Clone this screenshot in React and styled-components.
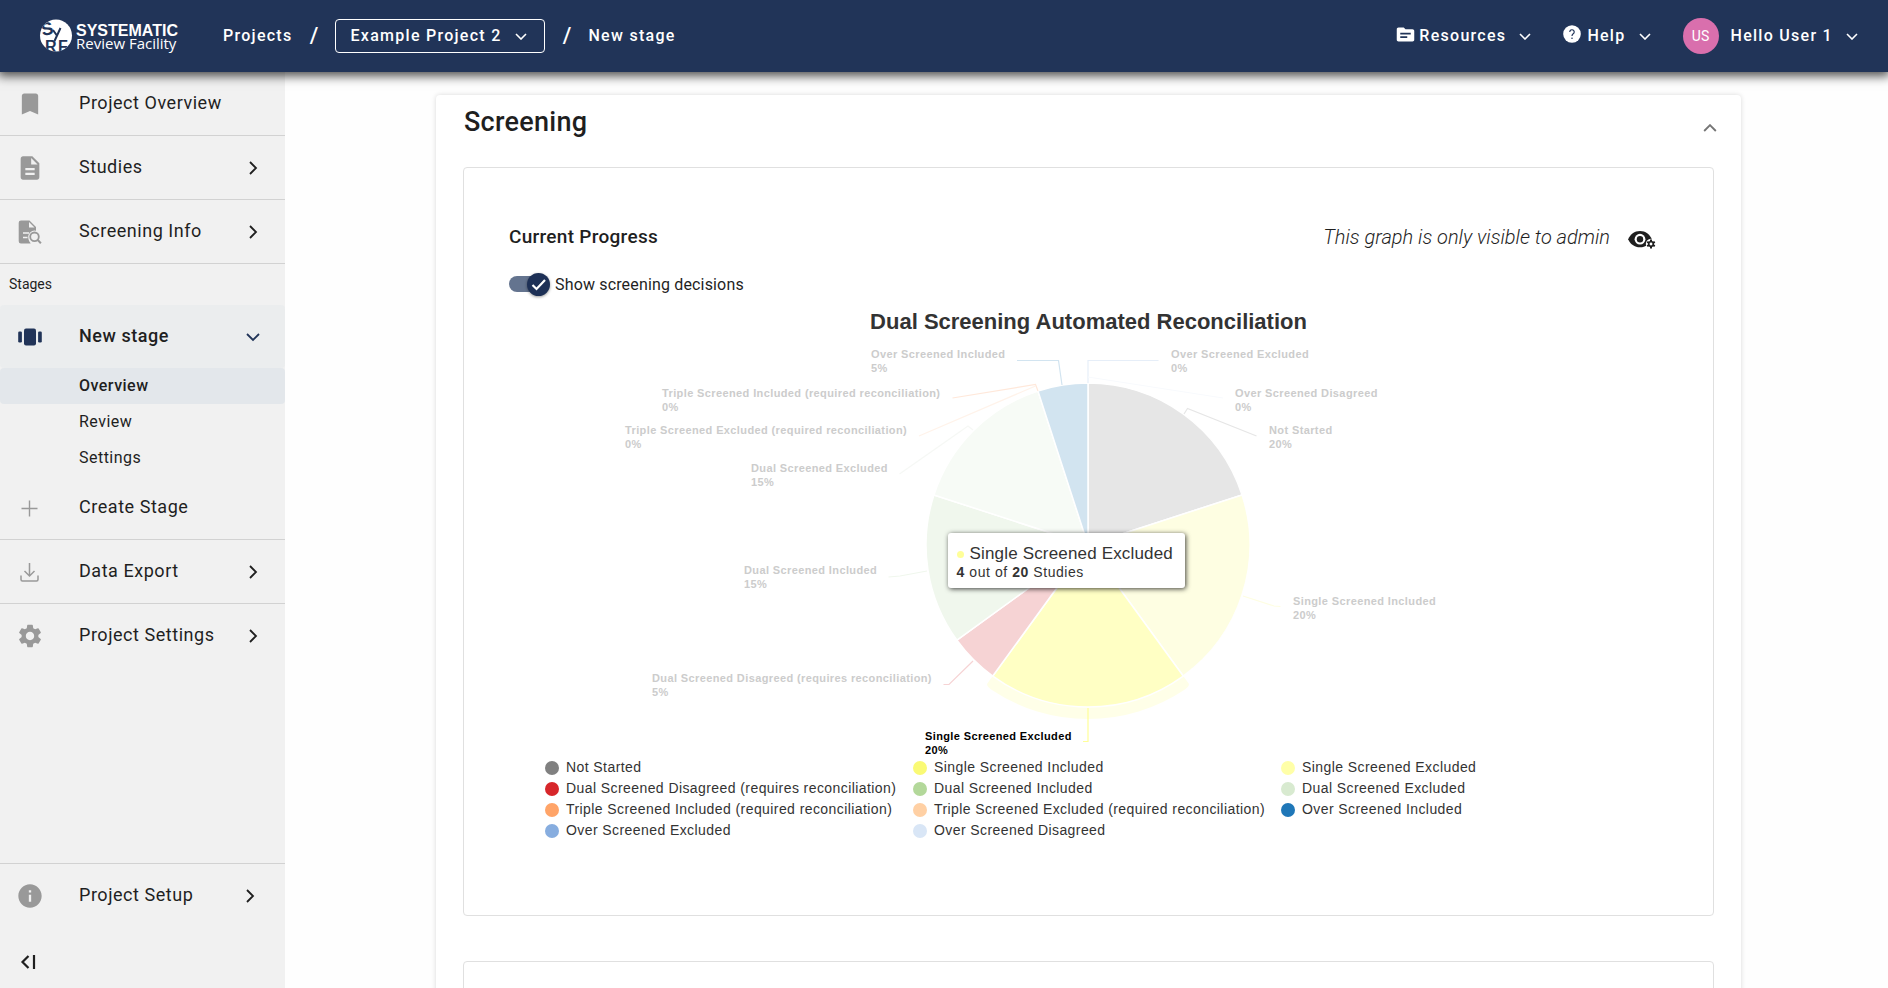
import React from "react";
import styled, { createGlobalStyle, css } from "styled-components";
import { MdBookmark, MdDescription, MdSettings, MdInfo, MdSource } from "react-icons/md";

const NAVY = "#213458";
const INK = "#1f1f1f";

const GlobalStyle = createGlobalStyle`
  *, *::before, *::after { box-sizing: border-box; }
  body {
    margin: 0;
    background: #fefefe;
    color: ${INK};
    font-family: Roboto, "Liberation Sans", sans-serif;
    font-size: 16px;
  }
  button { font: inherit; color: inherit; letter-spacing: inherit; background: none; border: 0; padding: 0; cursor: pointer; }
  a { color: inherit; text-decoration: none; }
  h1, h2, h3, p, ul { margin: 0; padding: 0; }
  ul { list-style: none; }
  svg { display: block; flex: none; }
`;

/* ---------- shell ---------- */

const Shell = styled.div`
  display: flex;
  flex-direction: column;
  height: 100vh;
`;

const Body = styled.div`
  display: flex;
  flex: 1;
  min-height: 0;
`;

/* ---------- top bar ---------- */

const TopBar = styled.header`
  position: relative;
  z-index: 2;
  display: flex;
  align-items: center;
  justify-content: space-between;
  flex: none;
  height: 72px;
  padding: 0 30px 0 39px;
  background: ${NAVY};
  color: #fff;
  font-weight: 500;
  box-shadow: 0 2px 10px 2px rgba(0, 0, 0, 0.7);
  clip-path: inset(0 0 -24px 0);
`;

const Trail = styled.nav`
  display: flex;
  align-items: center;
  letter-spacing: 0.08em;
`;

const LogoLink = styled.a`
  margin-right: 44px;
`;

const Crumb = styled.a`
  padding-bottom: 2px;
`;

const Slash = styled.span`
  width: 43px;
  padding-bottom: 2px;
  font-size: 22px;
  letter-spacing: 0;
  text-align: center;
`;

const ProjectPicker = styled.button`
  display: flex;
  align-items: center;
  justify-content: space-between;
  width: 210px;
  height: 34px;
  padding: 0 17px 0 14px;
  border: 1px solid #fff;
  border-radius: 4px;
`;

const PickerText = styled.span`
  padding-bottom: 2px;
`;

const Tools = styled.div`
  display: flex;
  align-items: center;
  gap: 32px;
  letter-spacing: 0.08em;
`;

const ToolButton = styled.button`
  display: flex;
  align-items: center;
  gap: 6px;
`;

const ToolIcon = styled.span`
  display: grid;
  place-items: center;
  width: 18px;
  padding-bottom: 4px;
`;

const ToolText = styled.span`
  margin-right: 7px;
  padding-bottom: 2px;
`;

const Avatar = styled.span`
  display: grid;
  place-items: center;
  width: 36px;
  height: 36px;
  margin-right: 6px;
  border-radius: 50%;
  background: #d96fad;
  font-size: 14px;
  font-weight: 400;
  letter-spacing: 0;
`;

/* ---------- side bar ---------- */

const SideBar = styled.nav`
  display: flex;
  flex-direction: column;
  flex: none;
  width: 285px;
  background: #f1f1f1;
`;

const SideItem = styled.a`
  display: grid;
  grid-template-columns: 28px minmax(0, 1fr) 16px;
  align-items: center;
  height: ${(p) => (p.$divided ? "64px" : "63px")};
  padding: 0 ${(p) => (p.$inset ? "27px" : "24px")} 0 16px;
  border-bottom: ${(p) => (p.$divided ? "1px solid #d2d2d2" : "0")};
  font-size: 18px;
  letter-spacing: 0.03em;
  white-space: nowrap;
  color: ${INK};
  svg:first-child { color: #999; }
  ${(p) =>
    p.$active &&
    css`
      background: #ebedee;
      border-radius: 4px;
      font-weight: 500;
      svg, svg:first-child { color: ${NAVY}; }
    `}
`;

const SideText = styled.span`
  padding: 0 0 2px 35px;
`;

const SideLabel = styled.h2`
  padding: 0 9px;
  font-size: 14px;
  font-weight: 400;
  line-height: 41px;
`;

const SubItem = styled.a`
  display: block;
  padding-left: 79px;
  border-radius: 4px;
  font-size: 16px;
  line-height: 36px;
  letter-spacing: 0.03em;
  font-weight: ${(p) => (p.$active ? 500 : 400)};
  background: ${(p) => (p.$active ? "#e3e7eb" : "transparent")};
`;

const SideFoot = styled.div`
  display: flex;
  flex-direction: column;
  margin-top: auto;
  border-top: 1px solid #d2d2d2;
`;

const CollapseButton = styled.button`
  width: 56px;
  height: 52px;
  margin-top: 9px;
  padding-left: 20px;
`;

/* ---------- content ---------- */

const Main = styled.main`
  flex: 1;
  min-width: 0;
  overflow-y: auto;
  scrollbar-width: none;
  padding: 23px 147px 0 151px;
`;

const Panel = styled.section`
  padding: 0 27px 28px;
  border-radius: 4px;
  background: #fff;
  box-shadow: 0 0 5px rgba(0, 0, 0, 0.15);
`;

const PanelHead = styled.div`
  display: flex;
  justify-content: space-between;
  height: 72px;
  padding: 12px 0 0 1px;
`;

const PanelTitle = styled.h1`
  font-size: 27px;
  font-weight: 500;
  line-height: 30px;
  letter-spacing: 0.01em;
`;

const FoldButton = styled.button`
  display: grid;
  place-items: center;
  width: 24px;
  height: 24px;
  margin: 9px -8px 0 0;
  color: #757575;
`;

const Card = styled.section`
  min-height: 300px;
  margin-bottom: 45px;
  padding: 55px 45px 74px;
  border: 1px solid #e0e0e0;
  border-radius: 4px;
`;

const CardHead = styled.div`
  display: flex;
  align-items: center;
  line-height: 28px;
`;

const CardTitle = styled.h2`
  flex: 1;
  font-size: 19px;
  font-weight: 500;
  letter-spacing: 0.015em;
`;

const AdminNote = styled.p`
  margin-right: 18px;
  font-size: 20px;
  font-style: italic;
  font-weight: 300;
`;

const EyeButton = styled.button`
  margin: 4px 12px 0 0;
`;

const SwitchRow = styled.label`
  display: flex;
  align-items: center;
  gap: 5px;
  width: max-content;
  height: 24px;
  margin: 21px 0 13px;
  letter-spacing: 0.01em;
`;

const SwitchInput = styled.input`
  appearance: none;
  position: relative;
  width: 41px;
  height: 16px;
  margin: 0;
  border-radius: 8px;
  background: linear-gradient(#64748f, #64748f) left / 36px 16px no-repeat;
  & + svg {
    position: relative;
    margin-left: -28px;
    border-radius: 50%;
    background: #1d3056;
    box-shadow: 0 1px 3px rgba(0, 0, 0, 0.4);
  }
`;

/* ---------- chart ---------- */

const Chart = styled.figure`
  margin: 0;
  font-family: "Liberation Sans", Arial, sans-serif;
  color: #333;
`;

const ChartTitle = styled.h3`
  height: 32px;
  font-size: 22px;
  line-height: 26px;
  text-align: center;
`;

const PieBox = styled.div`
  position: relative;
  width: 930px;
  margin: 0 auto;
  svg text {
    font-size: 11px;
    font-weight: 700;
    letter-spacing: 0.035em;
  }
`;

const Tooltip = styled.div`
  position: absolute;
  left: 324px;
  top: 192px;
  width: 237px;
  height: 55px;
  padding: 11px 9px;
  border-radius: 3px;
  background: #fff;
  box-shadow: 1px 1px 5px rgba(0, 0, 0, 0.75);
  font-size: 14px;
  line-height: 18px;
  letter-spacing: 0.04em;
  white-space: nowrap;
`;

const TipTitle = styled.div`
  display: flex;
  align-items: center;
  gap: 6px;
  font-size: 17px;
  line-height: 19px;
  letter-spacing: 0.01em;
  &::before {
    content: "";
    width: 7px;
    height: 7px;
    margin-top: 2px;
    border-radius: 50%;
    background: #ffff99;
  }
`;

const Legend = styled.ul`
  display: grid;
  grid-template-columns: repeat(3, 368px);
  padding-left: 36px;
  font-size: 14px;
  line-height: 21px;
  letter-spacing: 0.03em;
`;

const LegendItem = styled.li`
  display: flex;
  align-items: center;
  gap: 7px;
  white-space: nowrap;
  &::before {
    content: "";
    width: 14px;
    height: 14px;
    border-radius: 50%;
    background: ${(p) => p.$color};
  }
`;

/* ---------- icons ---------- */

const chevrons = {
  down: "M1 1l5 5 5-5",
  up: "M1 6l5-5 5 5",
};

function Chevron({ dir = "down", w = 12 }) {
  return (
    <svg width={w} height={(w * 7) / 12} viewBox="0 0 12 7" fill="none" stroke="currentColor" strokeWidth="1.6" aria-hidden="true">
      <path d={chevrons[dir]} />
    </svg>
  );
}

function SideChevron({ open }) {
  return (
    <svg width="16" height="16" viewBox="0 0 16 16" fill="none" stroke="currentColor" strokeWidth="1.8" aria-hidden="true">
      <path d={open ? "M2 5l6 6 6-6" : "M5 2l6 6-6 6"} />
    </svg>
  );
}

function Logo() {
  return (
    <svg width="140" height="36" viewBox="0 0 140 36" role="img" aria-label="Systematic Review Facility">
      <defs>
        <clipPath id="disc"><circle cx="17" cy="17.5" r="16" /></clipPath>
      </defs>
      <circle cx="17" cy="17.5" r="16" fill="#fff" />
      <g clipPath="url(#disc)" fill={NAVY} fontFamily="Liberation Sans, Arial, sans-serif" fontWeight="700">
        <text x="2" y="17" fontSize="18" transform="rotate(-12 8 10)">S</text>
        <path d="M14 12l3.500 5M21.500 10L15.500 23" stroke={NAVY} strokeWidth="2" fill="none" />
        <text x="6" y="34" fontSize="16">R</text>
        <text x="19" y="34" fontSize="16">F</text>
      </g>
      <text x="37" y="18" fill="#fff" fontFamily="Liberation Sans, Arial, sans-serif" fontWeight="700" fontSize="16" letterSpacing="0">SYSTEMATIC</text>
      <text x="37" y="31" fill="#fff" fontFamily="Open Sans, Noto Sans, sans-serif" fontWeight="400" fontSize="15" letterSpacing="0">Review Facility</text>
    </svg>
  );
}

function HelpIcon() {
  return (
    <svg width="18" height="18" viewBox="0 0 18 18" aria-hidden="true">
      <circle cx="9" cy="9" r="8.8" fill="#fff" />
      <path d="M6.8 7a2.2 2.2 0 1 1 3.4 1.8C9.4 9.4 9 9.8 9 11" fill="none" stroke={NAVY} strokeWidth="1.2" />
      <circle cx="9" cy="13.2" r="0.8" fill={NAVY} />
    </svg>
  );
}

function DocSearchIcon() {
  return (
    <svg width="28" height="28" viewBox="0 0 28 28" fill="none" aria-hidden="true">
      <path d="M5 2.5h8.500l6.500 6.500v4.200a7 7 0 0 0-5.500 11.800v.5H5a2.300 2.300 0 0 1-2.300-2.300V4.800A2.300 2.300 0 0 1 5 2.500z" fill="currentColor" />
      <path d="M13 4v5.500h5.500z" fill="#f1f1f1" />
      <path d="M7 15h6M7 19.500h4.500" stroke="#f1f1f1" strokeWidth="1.7" />
      <circle cx="18.5" cy="18.8" r="6.2" fill="#f1f1f1" />
      <circle cx="18.5" cy="18.8" r="4.3" stroke="currentColor" strokeWidth="1.8" />
      <path d="M21.500 21.800l3.400 3.400" stroke="currentColor" strokeWidth="2" />
    </svg>
  );
}

function StagesIcon() {
  return (
    <svg width="28" height="28" viewBox="0 0 28 28" fill="currentColor" aria-hidden="true">
      <rect x="8" y="5.5" width="12" height="17" rx="2" />
      <rect x="2.2" y="8.5" width="3.7" height="11" rx="1.2" />
      <rect x="22.1" y="8.5" width="3.7" height="11" rx="1.2" />
    </svg>
  );
}

function PlusIcon() {
  return (
    <svg width="28" height="28" viewBox="0 0 28 28" stroke="currentColor" strokeWidth="1.4" aria-hidden="true">
      <path d="M13.500 6.500v16M5.500 14.500h16" />
    </svg>
  );
}

function DownloadIcon() {
  return (
    <svg width="28" height="28" viewBox="0 0 28 28" fill="none" stroke="currentColor" strokeWidth="1.5" aria-hidden="true">
      <path d="M13.500 5v12.500M8.500 13l5 5 5-5M5 17.500v4a1.500 1.500 0 0 0 1.500 1.500h14a1.500 1.500 0 0 0 1.500-1.500v-4" />
    </svg>
  );
}

function CollapseIcon() {
  return (
    <svg width="16" height="16" viewBox="0 0 16 16" fill="none" stroke="currentColor" strokeWidth="2.2" aria-hidden="true">
      <path d="M8.500 2L2.500 8l6 6M14 1v14" />
    </svg>
  );
}

function EyeGearIcon() {
  return (
    <svg width="28" height="19" viewBox="0 0 28 19" aria-hidden="true">
      <path d="M12 1C6.600 1 2 4.400 .2 9.200 2 14 6.600 17.300 12 17.300S22 14 23.800 9.200C22 4.400 17.400 1 12 1z" fill={INK} />
      <circle cx="12" cy="9.2" r="5.4" fill="#fff" />
      <circle cx="12" cy="9.2" r="3.2" fill={INK} />
      <circle cx="23" cy="14" r="5.2" fill="#fff" />
      <g transform="translate(23 14)">
        <path d="M0-4.400V4.400M-3.800-2.200L3.800 2.200M-3.800 2.200L3.800-2.200" stroke={INK} strokeWidth="2" />
        <circle r="2.3" fill="#fff" stroke={INK} strokeWidth="1.7" />
      </g>
    </svg>
  );
}

/* ---------- data ---------- */

const CX = 464;
const CY = 204;
const R = 162;

const slices = [
  { share: 20, fill: "#e6e6e6" },
  { share: 20, fill: "#fefee2" },
  { share: 20, fill: "#ffffc4" },
  { share: 5, fill: "#f6d3d4" },
  { share: 15, fill: "#f0f7ed" },
  { share: 15, fill: "#f7fbf6" },
  { share: 5, fill: "#d2e4f0" },
];

const callouts = [
  { name: "Over Screened Included", pct: "5%", x: 247, y: 17, line: "M393 19.5H434.5L438 44", stroke: "#d2e4f0" },
  { name: "Triple Screened Included (required reconciliation)", pct: "0%", x: 38, y: 56, line: "M328.5 57L411.5 43.5L414 50", stroke: "#ffe8da" },
  { name: "Triple Screened Excluded (required reconciliation)", pct: "0%", x: 1, y: 93, line: "M295 95L411.5 45", stroke: "#fff3ea" },
  { name: "Dual Screened Excluded", pct: "15%", x: 127, y: 131, line: "M275.5 133L344 85L349 89", stroke: "#f6f8f5" },
  { name: "Dual Screened Included", pct: "15%", x: 120, y: 233, line: "M264.5 236L276 235L303 230", stroke: "#f0f7ed" },
  { name: "Dual Screened Disagreed (requires reconciliation)", pct: "5%", x: 28, y: 341, line: "M319.5 343.5H325L349 320", stroke: "#f6d3d4" },
  { name: "Single Screened Excluded", pct: "20%", x: 301, y: 399, line: "M459 400.5H464V367", stroke: "#ffff99", on: true },
  { name: "Over Screened Excluded", pct: "0%", x: 547, y: 17, line: "M534.5 19.5H464V42", stroke: "#e6eef8" },
  { name: "Over Screened Disagreed", pct: "0%", x: 611, y: 56, line: "M599 57L464 36", stroke: "#f8fafd" },
  { name: "Not Started", pct: "20%", x: 645, y: 93, line: "M632.5 95L563.5 67.5L560 73", stroke: "#e6e6e6" },
  { name: "Single Screened Included", pct: "20%", x: 669, y: 264, line: "M656.5 265.5L650 265L619 255", stroke: "#fefee2" },
];

const legend = [
  ["Not Started", "#808080"],
  ["Single Screened Included", "#fafa75"],
  ["Single Screened Excluded", "#ffffa8"],
  ["Dual Screened Disagreed (requires reconciliation)", "#d7262a"],
  ["Dual Screened Included", "#b3d89a"],
  ["Dual Screened Excluded", "#d8ead0"],
  ["Triple Screened Included (required reconciliation)", "#ffa468"],
  ["Triple Screened Excluded (required reconciliation)", "#ffd0a4"],
  ["Over Screened Included", "#1f77b8"],
  ["Over Screened Excluded", "#87addf"],
  ["Over Screened Disagreed", "#d9e6f6"],
];

const point = (pct, r) => {
  const a = (pct / 100) * Math.PI * 2;
  return `${CX + r * Math.sin(a)} ${CY - r * Math.cos(a)}`;
};

const wedge = (from, to) => `M${CX} ${CY}L${point(from, R)}A${R} ${R} 0 0 1 ${point(to, R)}Z`;

const halo = `M${point(40, R + 1)}L${point(40, R + 9)}Q${point(40, R + 12)} ${point(40.6, R + 12)}A${R + 12} ${R + 12} 0 0 1 ${point(59.4, R + 12)}Q${point(60, R + 12)} ${point(60, R + 9)}L${point(60, R + 1)}Z`;

function Pie() {
  let start = 0;
  return (
    <svg width="930" height="416" viewBox="0 0 930 416" fill="none" role="img" aria-label="Screening progress pie chart">
      <path d={halo} fill="#ffffe8" />
      {slices.map((s) => {
        const from = start;
        start += s.share;
        return <path key={from} d={wedge(from, start)} fill={s.fill} stroke="#fff" strokeWidth="1.5" strokeLinejoin="round" />;
      })}
      {callouts.map((c) => (
        <g key={c.name}>
          <path d={c.line} stroke={c.stroke} strokeWidth="1.2" />
          <text x={c.x} y={c.y} fill={c.on ? "#000" : "#ccc"}>
            {c.name}
            <tspan x={c.x} dy="14">{c.pct}</tspan>
          </text>
        </g>
      ))}
    </svg>
  );
}

export default function App() {
  return (
    <Shell>
      <GlobalStyle />
      <TopBar>
        <Trail aria-label="Breadcrumb">
          <LogoLink href="#home"><Logo /></LogoLink>
          <Crumb href="#projects">Projects</Crumb>
          <Slash>/</Slash>
          <ProjectPicker type="button"><PickerText>Example Project 2</PickerText><Chevron /></ProjectPicker>
          <Slash>/</Slash>
          <Crumb href="#stage">New stage</Crumb>
        </Trail>
        <Tools>
          <ToolButton type="button"><ToolIcon><MdSource size={21} /></ToolIcon><ToolText>Resources</ToolText><Chevron /></ToolButton>
          <ToolButton type="button"><ToolIcon><HelpIcon /></ToolIcon><ToolText>Help</ToolText><Chevron /></ToolButton>
          <ToolButton type="button"><Avatar>US</Avatar><ToolText>Hello User 1</ToolText><Chevron /></ToolButton>
        </Tools>
      </TopBar>
      <Body>
        <SideBar aria-label="Project">
          <SideItem href="#overview" $divided><MdBookmark size={28} /><SideText>Project Overview</SideText></SideItem>
          <SideItem href="#studies" $divided><MdDescription size={28} /><SideText>Studies</SideText><SideChevron /></SideItem>
          <SideItem href="#screening" $divided><DocSearchIcon /><SideText>Screening Info</SideText><SideChevron /></SideItem>
          <SideLabel>Stages</SideLabel>
          <SideItem href="#new-stage" $active><StagesIcon /><SideText>New stage</SideText><SideChevron open /></SideItem>
          <SubItem href="#stage-overview" $active>Overview</SubItem>
          <SubItem href="#stage-review">Review</SubItem>
          <SubItem href="#stage-settings">Settings</SubItem>
          <SideItem href="#create" $divided><PlusIcon /><SideText>Create Stage</SideText></SideItem>
          <SideItem href="#export" $divided><DownloadIcon /><SideText>Data Export</SideText><SideChevron /></SideItem>
          <SideItem href="#settings"><MdSettings size={28} /><SideText>Project Settings</SideText><SideChevron /></SideItem>
          <SideFoot>
            <SideItem href="#setup" $inset><MdInfo size={28} /><SideText>Project Setup</SideText><SideChevron /></SideItem>
            <CollapseButton type="button" aria-label="Collapse menu"><CollapseIcon /></CollapseButton>
          </SideFoot>
        </SideBar>
        <Main>
          <Panel>
            <PanelHead>
              <PanelTitle>Screening</PanelTitle>
              <FoldButton type="button" aria-label="Fold section"><Chevron dir="up" w={14} /></FoldButton>
            </PanelHead>
            <Card>
              <CardHead>
                <CardTitle>Current Progress</CardTitle>
                <AdminNote>This graph is only visible to admin</AdminNote>
                <EyeButton type="button" aria-label="Visibility settings"><EyeGearIcon /></EyeButton>
              </CardHead>
              <SwitchRow>
                <SwitchInput type="checkbox" role="switch" defaultChecked />
                <svg width="23" height="23" viewBox="0 0 23 23" fill="none" stroke="#fff" strokeWidth="2.2" aria-hidden="true">
                  <path d="M5.500 12l4 4 8.500-9" />
                </svg>
                Show screening decisions
              </SwitchRow>
              <Chart>
                <ChartTitle>Dual Screening Automated Reconciliation</ChartTitle>
                <PieBox>
                  <Pie />
                  <Tooltip role="tooltip">
                    <TipTitle>Single Screened Excluded</TipTitle>
                    <b>4</b> out of <b>20</b> Studies
                  </Tooltip>
                </PieBox>
                <Legend>
                  {legend.map(([name, color]) => (
                    <LegendItem key={name} $color={color}>{name}</LegendItem>
                  ))}
                </Legend>
              </Chart>
            </Card>
            <Card />
          </Panel>
        </Main>
      </Body>
    </Shell>
  );
}
